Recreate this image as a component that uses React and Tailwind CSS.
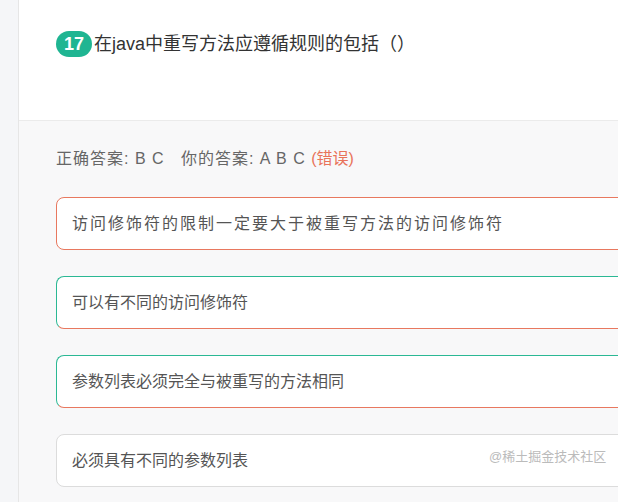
import React from 'react';

const font = { fontFamily: '"Liberation Sans", "Noto Sans CJK SC", sans-serif' };

const options = [
  { text: '访问修饰符的限制一定要大于被重写方法的访问修饰符', cls: 'border-[#e8785f] tracking-[2px]' },
  { text: '可以有不同的访问修饰符', cls: 'border-[#2bb894] border-b-[#e8785f] border-r-[#e8785f]' },
  { text: '参数列表必须完全与被重写的方法相同', cls: 'border-[#2bb894] border-b-[#e8785f] border-r-[#e8785f]' },
  { text: '必须具有不同的参数列表', cls: 'border-[#dcdcdc]' },
];

export default function App() {
  return (
    <div className="w-[618px] h-[502px] overflow-hidden flex bg-white" style={font}>
      {/* left strip */}
      <div className="w-[19px] shrink-0 bg-[#f5f6f8] border-r border-[#e6e6e6]" />

      <div className="flex-1 flex flex-col min-w-0">
        {/* question */}
        <div className="h-[121px] shrink-0 bg-white border-b border-[#ebebeb] pl-[37px] pt-[31px]">
          <div className="flex items-center">
            <span className="h-[26px] w-[36px] rounded-full bg-[#1fb592] text-white text-[18px] font-bold flex items-center justify-center">
              17
            </span>
            <span className="ml-[2px] text-[18px] text-[#333] leading-[26px]">在java中重写方法应遵循规则的包括（）</span>
          </div>
        </div>

        {/* answers */}
        <div className="flex-1 bg-[#f8f8f9] pl-[37px] pt-[26px] relative">
          <div className="text-[16px] tracking-[1px] text-[#666] leading-[24px]">
            正确答案: B C&nbsp;&nbsp; 你的答案: A B C <span className="text-[#e8735a] tracking-normal">(错误)</span>
          </div>

          <div className="mt-[26px] flex flex-col gap-[26px]">
            {options.map((o, i) => (
              <div
                key={i}
                className={`w-[640px] h-[53px] bg-white border rounded-[8px] flex items-center pl-[15px] text-[16px] text-[#555] ${o.cls}`}
              >
                {o.text}
              </div>
            ))}
          </div>

          <div className="absolute left-[470px] top-[326px] text-[13px] text-[#bbb]">@稀土掘金技术社区</div>
        </div>
      </div>
    </div>
  );
}
